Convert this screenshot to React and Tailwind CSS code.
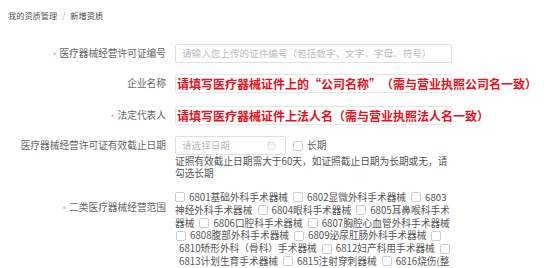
import { Calendar } from 'lucide-react'

const scopeLines = [
  ['box', '6801基础外科手术器械', 'box', '6802显微外科手术器械', 'box', '6803'],
  ['神经外科手术器械', 'box', '6804眼科手术器械', 'box', '6805耳鼻喉科手术'],
  ['器械', 'box', '6806口腔科手术器械', 'box', '6807胸腔心血管外科手术器械'],
  ['box', '6808腹部外科手术器械', 'box', '6809泌尿肛肠外科手术器械', 'box'],
  ['6810矫形外科（骨科）手术器械', 'box', '6812妇产科用手术器械', 'box'],
  ['6813计划生育手术器械', 'box', '6815注射穿刺器械', 'box', '6816烧伤(整'],
]

function Box({ className = '' }) {
  return (
    <span
      className={`inline-block h-[10px] w-[10px] shrink-0 rounded-[2px] border border-[#c9cdd4] bg-white ${className}`}
    />
  )
}

function Label({ required, children, className = '' }) {
  return (
    <div className={`w-[166px] shrink-0 text-right text-[9.7px] leading-[13px] text-[#666] ${className}`}>
      {required && <span className="relative top-[2px] mr-[3px] text-[8px] text-[#f37b7b]">*</span>}
      {children}
    </div>
  )
}

export default function App() {
  return (
    <div className="h-[268px] w-[554px] overflow-hidden bg-white font-['Noto_Sans_CJK_SC',sans-serif] [text-spacing-trim:space-all]">
      {/* Breadcrumb */}
      <div className="flex items-center pl-[8px] pt-[10px] text-[8.2px] leading-[10px] text-[#555]">
        <span>我的资质管理</span>
        <span className="mx-[5px] text-[#aaa]">/</span>
        <span className="text-[#444]">新增资质</span>
      </div>

      {/* Form */}
      <div className="mt-[24px]">
        {/* Licence number */}
        <div className="flex items-center">
          <Label required>医疗器械经营许可证编号</Label>
          <div className="ml-[9px] flex h-[19px] w-[277px] items-center rounded-[2px] border border-[#dcdfe6] pl-[6px] text-[9.6px] text-[#b8bcc4]">
            请输入您上传的证件编号（包括数字、文字、字母、符号）
          </div>
        </div>

        {/* Company name */}
        <div className="mt-[11px] flex items-center">
          <Label>企业名称</Label>
          <div className="ml-[9px] flex h-[19px] w-[277px] items-center overflow-visible whitespace-nowrap rounded-[2px] border border-[#e4e7ed] pl-[1px] text-[12px] font-bold text-[#e8111c]">
            请填写医疗器械证件上的“公司名称”（需与营业执照公司名一致）
          </div>
        </div>

        {/* Legal representative */}
        <div className="mt-[13px] flex items-center">
          <Label required>法定代表人</Label>
          <div className="ml-[9px] flex h-[19px] w-[277px] items-center overflow-visible whitespace-nowrap rounded-[2px] border border-[#e4e7ed] pl-[1px] text-[12px] font-bold text-[#e8111c]">
            请填写医疗器械证件上法人名（需与营业执照法人名一致）
          </div>
        </div>

        {/* Expiry date */}
        <div className="mt-[11px] flex items-start">
          <Label className="pt-[3px]">医疗器械经营许可证有效截止日期</Label>
          <div className="ml-[9px]">
            <div className="flex items-center">
              <div className="flex h-[19px] w-[111px] items-center justify-between rounded-[2px] border border-[#dcdfe6] pl-[6px] pr-[9px] text-[9.6px] text-[#b8bcc4]">
                <span>请选择日期</span>
                <Calendar size={9} strokeWidth={1.5} className="text-[#c9cdd4]" />
              </div>
              <Box className="ml-[7px]" />
              <span className="ml-[4px] text-[9.7px] text-[#666]">长期</span>
            </div>
            <div className="mt-[1px] w-[285px] text-[9.7px] leading-[11.5px] text-[#555]">
              <div>证照有效截止日期需大于60天，如证照截止日期为长期或无，请</div>
              <div>勾选长期</div>
            </div>
          </div>
        </div>

        {/* Business scope */}
        <div className="mt-[12px] flex items-start">
          <Label required className="pt-[10px]">二类医疗器械经营范围</Label>
          <div className="ml-[9px] w-[290px] text-[9.7px] leading-[12.8px] text-[#555]">
            {scopeLines.map((line, i) => (
              <div key={i} className={`flex items-center whitespace-nowrap ${i >= 3 ? 'pl-[1px]' : ''}`}>
                {line.map((item, j) =>
                  item === 'box' ? (
                    <Box key={j} className={j === 0 ? '' : 'ml-[5px]'} />
                  ) : (
                    <span key={j} className={j === 0 ? (i >= 4 ? 'ml-[3px]' : '') : 'ml-[4px]'}>
                      {item}
                    </span>
                  )
                )}
              </div>
            ))}
          </div>
        </div>
      </div>
    </div>
  )
}
